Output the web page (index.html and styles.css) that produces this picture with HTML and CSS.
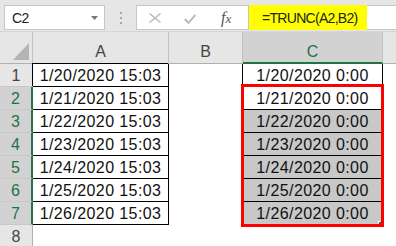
FILE: index.html
```html
<!DOCTYPE html>
<html lang="en">
<head>
    <meta charset="UTF-8">
    <title>TRUNC</title>
    <link rel="stylesheet" href="styles.css">
</head>
<body>
    <div class="topbar">
        <div class="namebox">
            <span>C2</span>
            <svg class="drop" width="7" height="4" viewBox="0 0 7 4"><path d="M0 0H7L3.5 4Z" fill="#777"/></svg>
        </div>
        <div class="grip"><i></i><i></i><i></i></div>
        <div class="fbuttons">
            <svg class="icon-x" width="12" height="10" viewBox="0 0 12 10"><path d="M0.5 0.5L11.5 9.5M11.5 0.5L0.5 9.5" stroke="#b9b9b9" stroke-width="1.4" fill="none"/></svg>
            <svg class="icon-ok" width="12" height="10" viewBox="0 0 12 10"><path d="M0.8 5L4.5 8.8L11.3 1" stroke="#bcbcbc" stroke-width="2" fill="none"/></svg>
            <span class="fx">f<span>x</span></span>
        </div>
        <div class="formula"><span class="hl">=TRUNC(A2,B2)</span></div>
    </div>

    <div class="sheet">
        <div class="cell corner"><svg width="16" height="17" viewBox="0 0 16 17"><path d="M16 0V17H0Z" fill="#b4b4b4"/></svg></div>
        <div class="cell colhead">A</div>
        <div class="cell colhead">B</div>
        <div class="cell colhead sel">C</div>
        <div class="cell colhead last"></div>

        <div class="cell rowhead">1</div>
        <div class="cell boxed first">1/20/2020 15:03</div>
        <div class="cell"></div>
        <div class="cell boxed left">1/20/2020 0:00</div>
        <div class="cell"></div>

        <div class="cell rowhead sel">2</div>
        <div class="cell boxed">1/21/2020 15:03</div>
        <div class="cell"></div>
        <div class="cell boxed">1/21/2020 0:00</div>
        <div class="cell"></div>

        <div class="cell rowhead sel">3</div>
        <div class="cell boxed">1/22/2020 15:03</div>
        <div class="cell"></div>
        <div class="cell boxed grey">1/22/2020 0:00</div>
        <div class="cell"></div>

        <div class="cell rowhead sel">4</div>
        <div class="cell boxed">1/23/2020 15:03</div>
        <div class="cell"></div>
        <div class="cell boxed grey">1/23/2020 0:00</div>
        <div class="cell"></div>

        <div class="cell rowhead sel">5</div>
        <div class="cell boxed">1/24/2020 15:03</div>
        <div class="cell"></div>
        <div class="cell boxed grey">1/24/2020 0:00</div>
        <div class="cell"></div>

        <div class="cell rowhead sel">6</div>
        <div class="cell boxed">1/25/2020 15:03</div>
        <div class="cell"></div>
        <div class="cell boxed grey">1/25/2020 0:00</div>
        <div class="cell"></div>

        <div class="cell rowhead sel">7</div>
        <div class="cell boxed">1/26/2020 15:03</div>
        <div class="cell"></div>
        <div class="cell boxed grey">1/26/2020 0:00</div>
        <div class="cell"></div>

        <div class="cell rowhead">8</div>
        <div class="cell"></div>
        <div class="cell"></div>
        <div class="cell"></div>
        <div class="cell"></div>

        <div class="redbox"></div>
        <div class="handle"></div>
    </div>
</body>
</html>
```

FILE: styles.css
```css
body {
    margin: 0;
    background-color: #fff;
    font-family: "Liberation Sans", Arial, sans-serif;
    overflow: hidden;
}

/* formula bar */
.topbar {
    display: flex;
    align-items: flex-start;
    height: 32px;
    box-sizing: border-box;
    padding-top: 5px;
    background-color: #e6e6e6;
    border-bottom: 1px solid #d5d5d5;
}

.namebox {
    display: flex;
    align-items: center;
    justify-content: space-between;
    box-sizing: border-box;
    width: 101px;
    height: 25px;
    margin-left: 4px;
    padding: 0 6px 0 7px;
    background-color: #fff;
    border: 1px solid #c6c6c6;
    font-size: 14px;
    letter-spacing: -0.5px;
    color: #222;
}

.grip {
    display: flex;
    flex-direction: column;
    gap: 3px;
    margin: 7px 0 0 15px;
}

.grip i {
    display: block;
    width: 2px;
    height: 2px;
    background-color: #a8a8a8;
}

.fbuttons {
    display: flex;
    align-items: center;
    box-sizing: border-box;
    width: 112px;
    height: 25px;
    margin-left: 14px;
    background-color: #fff;
    border: 1px solid #c6c6c6;
    border-right: none;
}

.icon-x {
    margin-left: 12px;
}

.icon-ok {
    margin-left: 23px;
    margin-top: 2px;
}

.fx {
    margin-left: 25px;
    font-family: "Liberation Serif", serif;
    font-style: italic;
    font-size: 16px;
    color: #555;
}

.fx span {
    font-size: 13px;
}

.formula {
    display: flex;
    flex: 1;
    box-sizing: border-box;
    height: 25px;
    background-color: #fff;
    border: 1px solid #c6c6c6;
    border-right: none;
}

.hl {
    display: flex;
    align-items: center;
    box-sizing: border-box;
    width: 118px;
    margin: -1px 0;
    padding-left: 13px;
    background-color: #ffff00;
    font-size: 14px;
    letter-spacing: -0.7px;
    color: #222;
    white-space: nowrap;
}

/* grid */
.sheet {
    position: relative;
    display: grid;
    grid-template-columns: 33px 136px 74px 140px 1fr;
    grid-template-rows: 32px repeat(8, 23px);
}

.cell {
    display: flex;
    align-items: center;
    justify-content: center;
    box-sizing: border-box;
    padding-top: 1px;
    border-right: 1px solid transparent;
    border-bottom: 1px solid transparent;
    font-size: 16px;
    letter-spacing: 0.4px;
    color: #111;
    white-space: nowrap;
}

.corner {
    align-items: flex-end;
    justify-content: flex-end;
    padding: 0 3px 3px 0;
    background-color: #e6e6e6;
    border-right-color: #c2c2c2;
    border-bottom-color: #b0b0b0;
}

.colhead {
    padding-top: 9px;
    background-color: #e6e6e6;
    border-right-color: #c2c2c2;
    border-bottom-color: #b0b0b0;
    color: #444;
    letter-spacing: 0;
}

.colhead.sel {
    background-color: #d2d2d2;
    border-bottom: 2px solid #217346;
    color: #217346;
}

.colhead.last {
    border-right: none;
}

.rowhead {
    background-color: #e6e6e6;
    border-right-color: #b0b0b0;
    border-bottom-color: #c8c8c8;
    color: #444;
    letter-spacing: 0;
}

.rowhead.sel {
    background-color: #d2d2d2;
    border-right: 2px solid #217346;
    color: #217346;
}

.boxed {
    border-right-color: #000;
    border-bottom-color: #000;
}

.boxed.first {
    box-shadow: -1px -1px 0 #000;
}

.boxed.left {
    box-shadow: -1px 0 0 #000;
}

.grey {
    background-color: #c8c8c8;
}

.redbox {
    position: absolute;
    left: 241px;
    top: 52px;
    width: 143px;
    height: 143px;
    box-sizing: border-box;
    border: 3px solid #f00;
}

.handle {
    position: absolute;
    left: 379px;
    top: 190px;
    width: 2px;
    height: 2px;
    background-color: #217346;
    box-shadow: -1px -1px 0 #fff;
}
```
